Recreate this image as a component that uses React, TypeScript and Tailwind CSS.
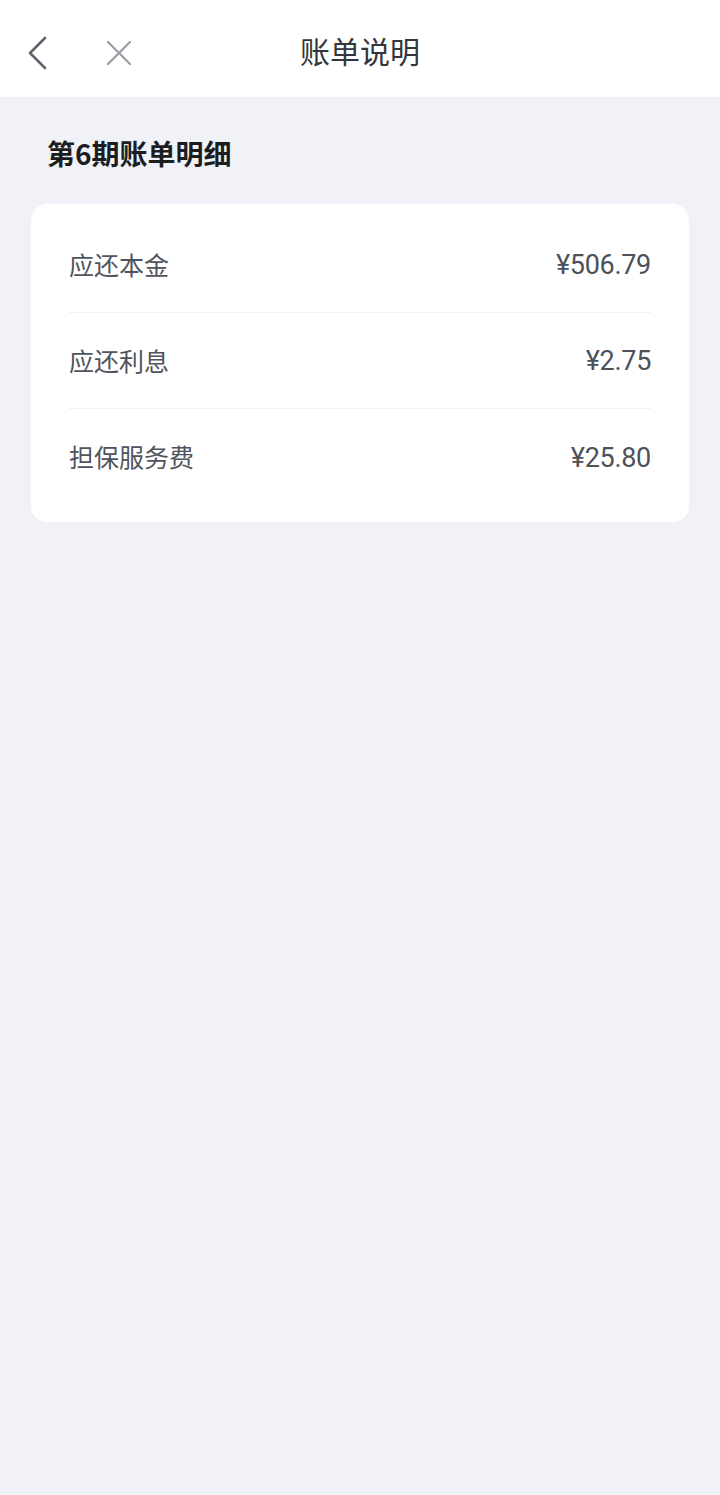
type Item = {
    label: string;
    amount: string;
};

const items: Item[] = [
    { label: "应还本金", amount: "¥506.79" },
    { label: "应还利息", amount: "¥2.75" },
    { label: "担保服务费", amount: "¥25.80" },
];

const cjk = { fontFamily: '"Noto Sans CJK SC", "Noto Sans", sans-serif' };

const App = () => {
    return (
        <div className="min-h-[1495px] bg-[#f1f2f7]" style={cjk}>
            {/* Top bar */}
            <div className="relative h-[97px] bg-white flex items-center">
                <svg className="absolute left-[24px] top-[34px]" width="28" height="38" viewBox="0 0 28 38" fill="none">
                    <polyline points="21,4 6,19 21,34" stroke="#5f636b" strokeWidth="2.6" strokeLinecap="round" strokeLinejoin="round" />
                </svg>
                <svg className="absolute left-[104px] top-[38px]" width="30" height="30" viewBox="0 0 30 30" fill="none">
                    <path d="M4 4 L26 26 M26 4 L4 26" stroke="#9a9da3" strokeWidth="2.2" strokeLinecap="round" />
                </svg>
                <h1 className="w-full text-center text-[30px] text-[#33363c] leading-none pt-[2px]">
                    账单说明
                </h1>
            </div>

            {/* Section title */}
            <div className="px-[47px] pt-[38px] pb-[32px]">
                <h2 className="text-[28px] font-bold text-[#1b1d21] leading-[37px]">第6期账单明细</h2>
            </div>

            {/* Detail card */}
            <div className="mx-[31px] bg-white rounded-[16px] px-[38px] pt-[13px] pb-[17px]">
                {items.map((item, index) => (
                    <div
                        key={index}
                        className={`flex items-center justify-between h-[96px] ${index < items.length - 1 ? "border-b border-[#f0f1f4]" : ""}`}
                    >
                        <span className="text-[25px] text-[#50545c]">{item.label}</span>
                        <span
                            className="text-[27px] text-[#4d5159] pt-[2px] tracking-[-0.3px]"
                            style={{ fontFamily: 'Roboto, "Noto Sans CJK SC", sans-serif' }}
                        >
                            {item.amount}
                        </span>
                    </div>
                ))}
            </div>
        </div>
    );
};

export default App;
